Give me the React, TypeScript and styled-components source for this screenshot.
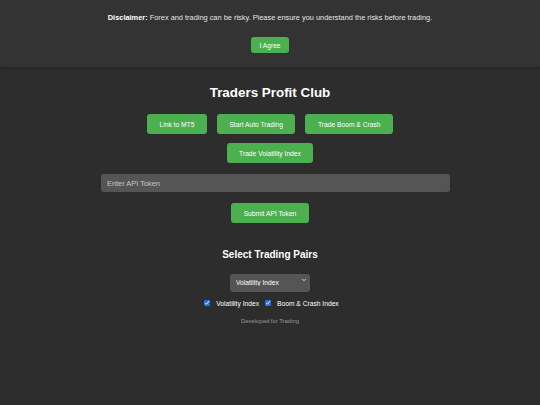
import React from "react";
import styled, { createGlobalStyle } from "styled-components";
import { ChevronDown } from "lucide-react";

const Global = createGlobalStyle`
  html, body { margin: 0; padding: 0; }
  body {
    background: #2d2d2d;
    color: #fff;
    font-family: "Liberation Sans", Arial, sans-serif;
    min-height: 405px;
  }
  * { box-sizing: border-box; }
`;

const Header = styled.header`
  background: #333333;
  padding: 12px 0 14px;
  display: flex;
  flex-direction: column;
  align-items: center;
  box-shadow: 0 1px 3px rgba(0, 0, 0, 0.3);
`;

const Disclaimer = styled.p`
  margin: 0 0 14px;
  font-size: 7.4px;
  line-height: 11px;
  color: #e6e6e6;
  text-align: center;
  strong { color: #fff; }
`;

const GreenButton = styled.button<{ $h?: number; $px?: number }>`
  background: #4caf50;
  color: #fff;
  border: none;
  border-radius: 3px;
  height: ${(p) => p.$h ?? 20}px;
  padding: 0 ${(p) => p.$px ?? 12.5}px;
  font-family: "Liberation Sans", Arial, sans-serif;
  font-size: 6.7px;
  cursor: pointer;
  white-space: nowrap;
`;

const Main = styled.main`
  display: flex;
  flex-direction: column;
  align-items: center;
  padding-top: 18px;
`;

const Title = styled.h1`
  margin: 0 0 13px;
  font-size: 13.4px;
  line-height: 16px;
  font-weight: bold;
`;

const ButtonRow = styled.div<{ $mb: number }>`
  display: flex;
  gap: 10px;
  justify-content: center;
  margin-bottom: ${(p) => p.$mb}px;
`;

const InputWrap = styled.div`
  width: 338px;
  margin-bottom: 11px;
`;

const TokenInput = styled.input`
  box-sizing: content-box;
  width: 100%;
  height: 18px;
  padding: 0 5px 0 6px;
  border: none;
  border-radius: 3px;
  background: #555;
  color: #fff;
  font-family: "Liberation Sans", Arial, sans-serif;
  font-size: 7.4px;
  display: block;
  outline: none;
  &::placeholder { color: #c8c8c8; }
`;

const SubTitle = styled.h2`
  margin: 26px 0 10px;
  font-size: 10px;
  line-height: 12px;
  font-weight: bold;
`;

const SelectWrap = styled.div`
  position: relative;
  width: 80px;
  height: 18px;
  margin-bottom: 9px;
`;

const PairSelect = styled.select`
  appearance: none;
  width: 100%;
  height: 100%;
  border: none;
  border-radius: 3px;
  background: #555;
  color: #fff;
  padding: 0 6px;
  font-family: "Liberation Sans", Arial, sans-serif;
  font-size: 6.7px;
  outline: none;
`;

const Chevron = styled.span`
  position: absolute;
  right: 3px;
  top: 6px;
  display: flex;
  color: #fff;
  pointer-events: none;
`;

const CheckRow = styled.div`
  display: flex;
  align-items: center;
  gap: 6px;
  height: 10px;
  margin: 0 0 10px 3px;
`;

const CheckLabel = styled.label`
  display: flex;
  align-items: center;
  font-size: 6.7px;
  color: #fff;
  input {
    width: 6px;
    height: 6px;
    margin: 0 6px 0 0;
    accent-color: #1a73e8;
  }
`;

const Footer = styled.p`
  margin: 0;
  font-size: 5.9px;
  color: #9a9a9a;
`;

export default function App() {
  return (
    <>
      <Global />
      <Header>
        <Disclaimer>
          <strong>Disclaimer:</strong> Forex and trading can be risky. Please ensure you understand the risks before trading.
        </Disclaimer>
        <GreenButton $h={16} $px={8.5}>I Agree</GreenButton>
      </Header>
      <Main>
        <Title>Traders Profit Club</Title>
        <ButtonRow $mb={9}>
          <GreenButton>Link to MT5</GreenButton>
          <GreenButton>Start Auto Trading</GreenButton>
          <GreenButton>Trade Boom &amp; Crash</GreenButton>
        </ButtonRow>
        <ButtonRow $mb={11}>
          <GreenButton>Trade Volatility Index</GreenButton>
        </ButtonRow>
        <InputWrap>
          <TokenInput placeholder="Enter API Token" />
        </InputWrap>
        <GreenButton>Submit API Token</GreenButton>
        <SubTitle>Select Trading Pairs</SubTitle>
        <SelectWrap>
          <PairSelect defaultValue="volatility">
            <option value="volatility">Volatility Index</option>
            <option value="boom">Boom &amp; Crash Index</option>
          </PairSelect>
          <Chevron>
            <ChevronDown size={6} strokeWidth={3} />
          </Chevron>
        </SelectWrap>
        <CheckRow>
          <CheckLabel>
            <input type="checkbox" defaultChecked />
            Volatility Index
          </CheckLabel>
          <CheckLabel>
            <input type="checkbox" defaultChecked />
            Boom &amp; Crash Index
          </CheckLabel>
        </CheckRow>
        <Footer>Developed for Trading</Footer>
      </Main>
    </>
  );
}
